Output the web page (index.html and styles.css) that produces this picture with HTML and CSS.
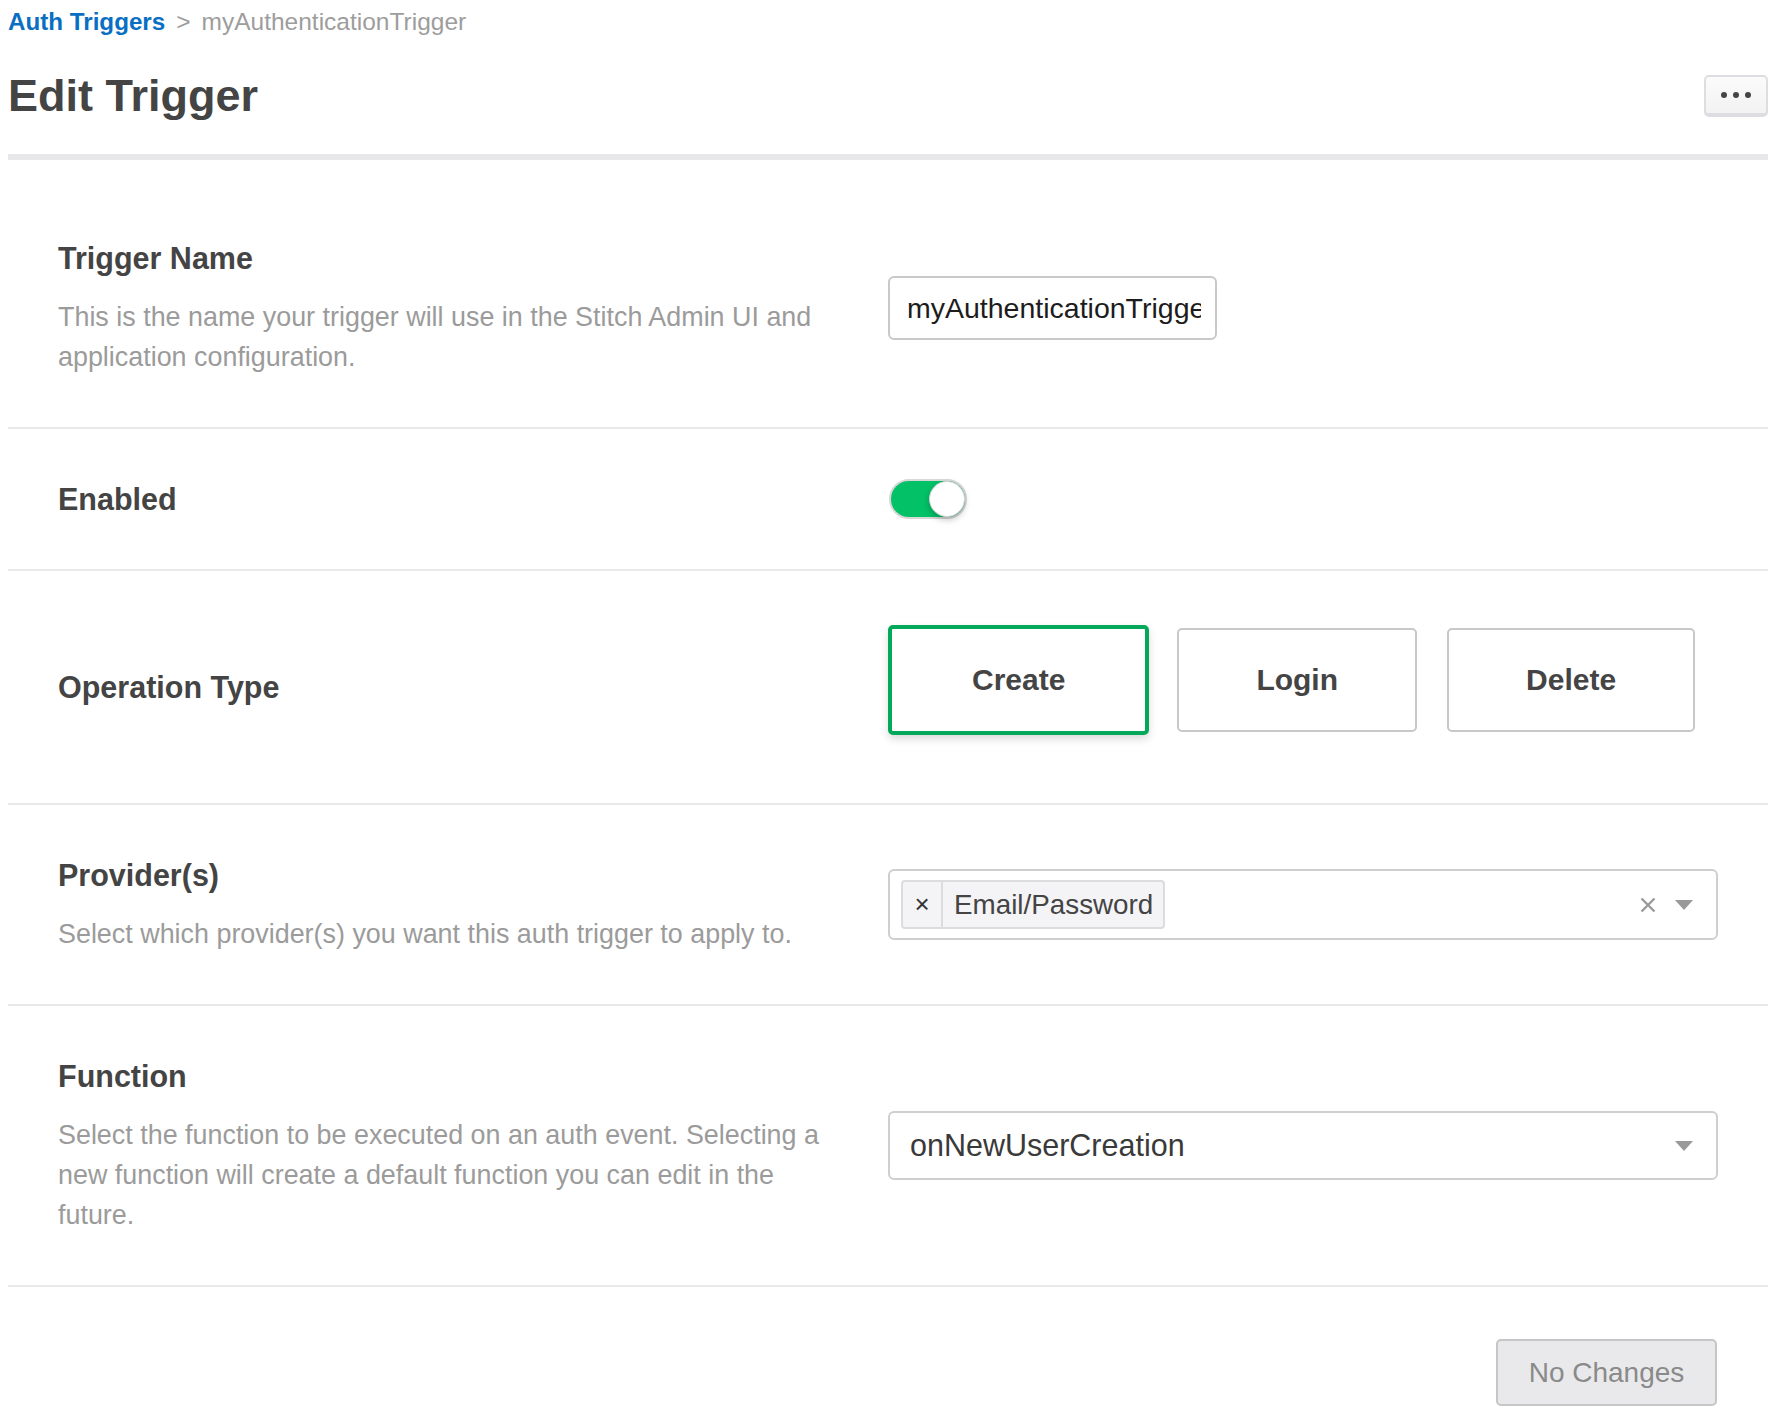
FILE: index.html
```html
<!DOCTYPE html>
<html lang="en">
<head>
<meta charset="utf-8">
<title>Edit Trigger</title>
<link rel="stylesheet" href="styles.css">
</head>
<body>
<div class="page">
  <nav class="breadcrumb">
    <a class="crumb-link" href="#">Auth Triggers</a>
    <span class="crumb-sep">&gt;</span>
    <span class="crumb-current">myAuthenticationTrigger</span>
  </nav>

  <header class="header">
    <h1 class="title">Edit Trigger</h1>
    <button class="more-btn" type="button" aria-label="More">
      <span class="dot"></span><span class="dot"></span><span class="dot"></span>
    </button>
  </header>

  <div class="form">
    <section class="row">
      <div class="info">
        <h2 class="label">Trigger Name</h2>
        <p class="desc">This is the name your trigger will use in the Stitch Admin UI and application configuration.</p>
      </div>
      <div class="control">
        <input class="text-input" type="text" value="myAuthenticationTrigger">
      </div>
    </section>

    <section class="row">
      <div class="info">
        <h2 class="label">Enabled</h2>
      </div>
      <div class="control">
        <span class="toggle"><span class="knob"></span></span>
      </div>
    </section>

    <section class="row">
      <div class="info">
        <h2 class="label">Operation Type</h2>
      </div>
      <div class="control">
        <div class="op-group">
          <button class="op-btn active" type="button">Create</button>
          <button class="op-btn" type="button">Login</button>
          <button class="op-btn" type="button">Delete</button>
        </div>
      </div>
    </section>

    <section class="row">
      <div class="info">
        <h2 class="label">Provider(s)</h2>
        <p class="desc">Select which provider(s) you want this auth trigger to apply to.</p>
      </div>
      <div class="control">
        <div class="select multi">
          <div class="chips">
            <span class="chip"><span class="chip-x">×</span><span class="chip-text">Email/Password</span></span>
          </div>
          <span class="clear-x">
            <svg width="18" height="18" viewBox="0 0 18 18"><path d="M2.5 2.5 L15.5 15.5 M15.5 2.5 L2.5 15.5" stroke="#9a9a9a" stroke-width="2.4" fill="none"/></svg>
          </span>
          <span class="arrow"></span>
        </div>
      </div>
    </section>

    <section class="row">
      <div class="info">
        <h2 class="label">Function</h2>
        <p class="desc">Select the function to be executed on an auth event. Selecting a new function will create a default function you can edit in the future.</p>
      </div>
      <div class="control">
        <div class="select single">
          <span class="select-value">onNewUserCreation</span>
          <span class="arrow"></span>
        </div>
      </div>
    </section>
  </div>

  <footer class="footer">
    <button class="save-btn" type="button">No Changes</button>
  </footer>
</div>
</body>
</html>
```
FILE: styles.css
```css
* { box-sizing: border-box; }

html, body {
  margin: 0;
  padding: 0;
  background: #ffffff;
}

body {
  font-family: "Liberation Sans", Arial, Helvetica, sans-serif;
  color: #3d3d3d;
}

.page {
  padding: 0 20px 0 8px;
}

/* Breadcrumb */
.breadcrumb {
  padding-top: 6px;
  height: 38px;
  line-height: 32px;
  font-size: 24.5px;
  display: flex;
  gap: 11px;
}

.crumb-link {
  color: #0a6fc2;
  font-weight: 700;
  text-decoration: none;
  font-size: 24.2px;
}

.crumb-sep,
.crumb-current {
  color: #9d9d9d;
}

/* Header */
.header {
  display: flex;
  align-items: center;
  justify-content: space-between;
  padding: 32px 0 32px 0;
  border-bottom: 6px solid #e8e8ea;
}

.title {
  margin: 0;
  font-size: 45px;
  line-height: 52px;
  font-weight: 700;
  color: #444444;
}

.more-btn {
  width: 64px;
  height: 42px;
  border: 2px solid #dedee2;
  border-bottom-width: 4px;
  border-radius: 5px;
  background: linear-gradient(#fbfbfb, #f2f2f2);
  display: flex;
  align-items: center;
  justify-content: center;
  gap: 6px;
  padding: 0;
}

.dot {
  width: 6px;
  height: 6px;
  border-radius: 50%;
  background: #444444;
}

/* Form rows */
.form {
  padding-top: 28px;
}

.row {
  display: grid;
  grid-template-columns: 1fr 1fr;
  align-items: center;
  padding: 50px 50px;
  border-bottom: 2px solid #e9e9e9;
}

.info {
  padding-right: 40px;
}

.label {
  margin: 0;
  font-size: 30.5px;
  line-height: 40px;
  font-weight: 700;
  color: #444444;
}

.desc {
  margin: 19px 0 0 0;
  font-size: 26.9px;
  line-height: 40px;
  color: #9b9b9b;
}

.control {
  display: flex;
  align-items: center;
}

/* Text input */
.text-input {
  width: 329px;
  height: 64px;
  border: 2px solid #c9c9c9;
  border-radius: 6px;
  padding: 2px 14px 0 17px;
  font-family: "Liberation Sans", Arial, sans-serif;
  font-size: 28.5px;
  color: #1c1c1c;
  background: #ffffff;
  outline: none;
}

/* Toggle */
.toggle {
  position: relative;
  display: block;
  width: 78px;
  height: 40px;
  border-radius: 20px;
  background: #03c166;
  border: 2px solid #d8d8d8;
  margin-left: 1px;
}

.knob {
  position: absolute;
  top: 0;
  right: 0;
  width: 36px;
  height: 36px;
  border-radius: 50%;
  background: #ffffff;
  border: 1px solid #d4d4d4;
  box-shadow: 0 3px 6px rgba(0, 0, 0, 0.22);
}

/* Operation type buttons */
.op-group {
  display: flex;
  align-items: center;
  gap: 30px;
  padding-top: 4px;
  margin-bottom: 18px;
}

.op-btn {
  height: 104px;
  padding: 0 77px;
  border: 2px solid #c8c8c8;
  border-radius: 5px;
  background: #ffffff;
  font-family: "Liberation Sans", Arial, sans-serif;
  font-size: 30px;
  font-weight: 700;
  color: #444444;
}

.op-btn.active {
  height: 110px;
  padding: 0 80px;
  margin: 0 -2px 0 0;
  border: 4px solid #04a859;
  box-shadow: 0 4px 8px rgba(0, 0, 0, 0.15);
}

/* Selects */
.select {
  position: relative;
  width: 100%;
  display: flex;
  align-items: center;
  border: 2px solid #cfcfcf;
  border-radius: 6px;
  background: #ffffff;
}

.select.multi {
  height: 71px;
  padding: 0 20px 0 11px;
}

.select.single {
  height: 69px;
  padding: 0 20px 0 20px;
}

.chips {
  flex: 1;
  display: flex;
}

.chip {
  display: flex;
  align-items: stretch;
  height: 49px;
  border: 2px solid #dcdcdc;
  border-radius: 4px;
  background: #f4f4f6;
}

.chip-x {
  width: 40px;
  display: flex;
  align-items: center;
  justify-content: center;
  border-right: 2px solid #dcdcdc;
  font-size: 26px;
  color: #333333;
}

.chip-text {
  display: flex;
  align-items: center;
  padding: 0 10px 0 11px;
  font-size: 27.8px;
  color: #444444;
}

.clear-x {
  display: flex;
  align-items: center;
  margin-right: 18px;
}

.arrow {
  width: 0;
  height: 0;
  border-left: 9px solid transparent;
  border-right: 9px solid transparent;
  border-top: 10px solid #999999;
  margin-right: 3px;
}

.select-value {
  flex: 1;
  font-size: 30.5px;
  color: #3a3a3a;
}

/* Footer */
.footer {
  display: flex;
  justify-content: flex-end;
  padding: 52px 51px 30px 0;
}

.save-btn {
  width: 221px;
  height: 67px;
  border: 2px solid #c6c6c6;
  border-radius: 5px;
  background: #e9e9eb;
  font-family: "Liberation Sans", Arial, sans-serif;
  font-size: 28px;
  color: #8a8a8a;
}
```
